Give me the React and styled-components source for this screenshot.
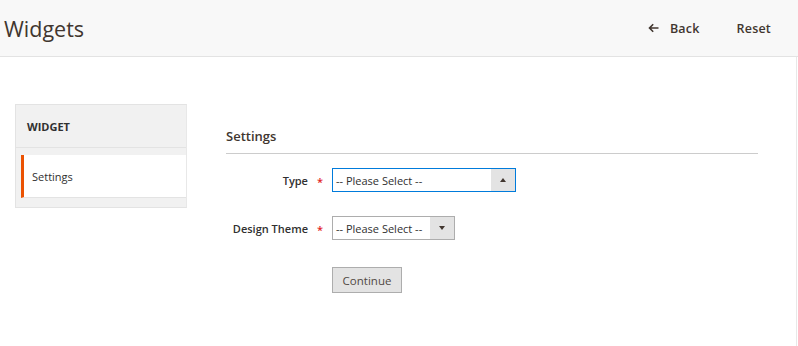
import React from "react";
import styled, { createGlobalStyle } from "styled-components";

const GlobalStyle = createGlobalStyle`
  html, body {
    margin: 0;
    padding: 0;
    background: #ffffff;
  }
  body {
    font-family: "Open Sans", "Liberation Sans", sans-serif;
    color: #303030;
  }
`;

const Page = styled.div`
  width: 798px;
  height: 346px;
  box-sizing: border-box;
  overflow: hidden;
`;

const Header = styled.header`
  height: 57px;
  box-sizing: border-box;
  display: flex;
  align-items: center;
  justify-content: space-between;
  background: #f8f8f8;
  border-bottom: 1px solid #e3e3e3;
  padding: 0 27px 0 4px;
`;

const Title = styled.h1`
  margin: 0;
  font-size: 21.5px;
  font-weight: 400;
  color: #41362f;
`;

const Actions = styled.div`
  display: flex;
  align-items: center;
  gap: 37px;
`;

const ActionButton = styled.button`
  display: flex;
  align-items: center;
  gap: 11px;
  background: none;
  border: none;
  padding: 0;
  font-family: inherit;
  font-size: 12.5px;
  font-weight: 600;
  letter-spacing: 0.2px;
  color: #41362f;
  cursor: pointer;
`;

const Body = styled.div`
  display: flex;
  align-items: flex-start;
  gap: 39px;
  height: 289px;
  box-sizing: border-box;
  padding: 47px 38px 0 15px;
  border-right: 1px solid #e8e8e8;
  margin-right: 1px;
`;

const Sidebar = styled.nav`
  width: 172px;
  flex-shrink: 0;
  box-sizing: border-box;
  background: #f1f1f1;
  border: 1px solid #e3e3e3;
  border-right-color: #e8e8e8;
  padding-bottom: 9px;
`;

const SideTitle = styled.div`
  height: 43px;
  box-sizing: border-box;
  display: flex;
  align-items: center;
  padding-left: 11px;
  font-size: 11px;
  font-weight: 700;
  color: #303030;
  border-bottom: 1px solid #e3e3e3;
  margin-bottom: 7px;
`;

const SideItem = styled.div`
  height: 43px;
  box-sizing: border-box;
  margin-left: 5px;
  display: flex;
  align-items: center;
  padding-left: 8px;
  background: #ffffff;
  border-left: 3px solid ${(p) => (p.$active ? "#eb5202" : "transparent")};
  border-bottom: 1px solid #e3e3e3;
  font-size: 11px;
  color: #303030;
`;

const Content = styled.main`
  flex: 1;
`;

const Legend = styled.div`
  margin-top: 23px;
  height: 18px;
  line-height: 18px;
  padding-bottom: 8px;
  border-bottom: 1px solid #cccccc;
  font-size: 13px;
  font-weight: 600;
  color: #41362f;
`;

const Field = styled.div`
  display: flex;
  align-items: center;
  margin-top: ${(p) => p.$gap}px;
`;

const Label = styled.label`
  width: 106px;
  box-sizing: border-box;
  display: flex;
  justify-content: flex-end;
  align-items: center;
  padding-right: 9px;
  font-size: 11px;
  font-weight: 600;
  color: #303030;
`;

const Required = styled.span`
  margin-left: 9px;
  color: #e22626;
  font-size: 11px;
  line-height: 1;
  position: relative;
  top: 1px;
`;

const Select = styled.div`
  width: ${(p) => p.$width}px;
  height: 24px;
  box-sizing: border-box;
  display: flex;
  align-items: stretch;
  border: 1px solid ${(p) => (p.$focus ? "#007bdb" : "#adadad")};
  background: #ffffff;
`;

const SelectText = styled.span`
  flex: 1;
  display: flex;
  align-items: center;
  padding-left: 3px;
  font-size: 11px;
  color: #303030;
  white-space: nowrap;
`;

const Arrow = styled.span`
  width: 24px;
  display: flex;
  align-items: center;
  justify-content: center;
  background: #e3e3e3;
`;

const Caret = styled.span`
  width: 0;
  height: 0;
  border-left: 3.5px solid transparent;
  border-right: 3.5px solid transparent;
  ${(p) =>
    p.$up
      ? "border-bottom: 4px solid #41362f;"
      : "border-top: 4px solid #41362f;"}
`;

const Button = styled.button`
  margin-left: 106px;
  height: 26px;
  width: 70px;
  box-sizing: border-box;
  background: #e3e3e3;
  border: 1px solid #adadad;
  font-family: inherit;
  font-size: 11.5px;
  color: #514943;
  padding: 0;
  cursor: pointer;
`;

const BackArrow = () => (
  <svg width="11" height="10" viewBox="0 0 11 10" fill="none">
    <path d="M10.5 5H1.8M5.2 1.3L1.5 5l3.7 3.7" stroke="#41362f" strokeWidth="1.6" />
  </svg>
);

export default function App() {
  return (
    <Page>
      <GlobalStyle />
      <Header>
        <Title>Widgets</Title>
        <Actions>
          <ActionButton>
            <BackArrow />
            Back
          </ActionButton>
          <ActionButton>Reset</ActionButton>
        </Actions>
      </Header>
      <Body>
        <Sidebar>
          <SideTitle>WIDGET</SideTitle>
          <SideItem $active>Settings</SideItem>
        </Sidebar>
        <Content>
          <Legend>Settings</Legend>
          <Field $gap={14}>
            <Label>
              Type<Required>*</Required>
            </Label>
            <Select $width={184} $focus>
              <SelectText>-- Please Select --</SelectText>
              <Arrow>
                <Caret $up />
              </Arrow>
            </Select>
          </Field>
          <Field $gap={24}>
            <Label>
              Design Theme<Required>*</Required>
            </Label>
            <Select $width={123}>
              <SelectText>-- Please Select --</SelectText>
              <Arrow>
                <Caret />
              </Arrow>
            </Select>
          </Field>
          <Field $gap={27}>
            <Button>Continue</Button>
          </Field>
        </Content>
      </Body>
    </Page>
  );
}
